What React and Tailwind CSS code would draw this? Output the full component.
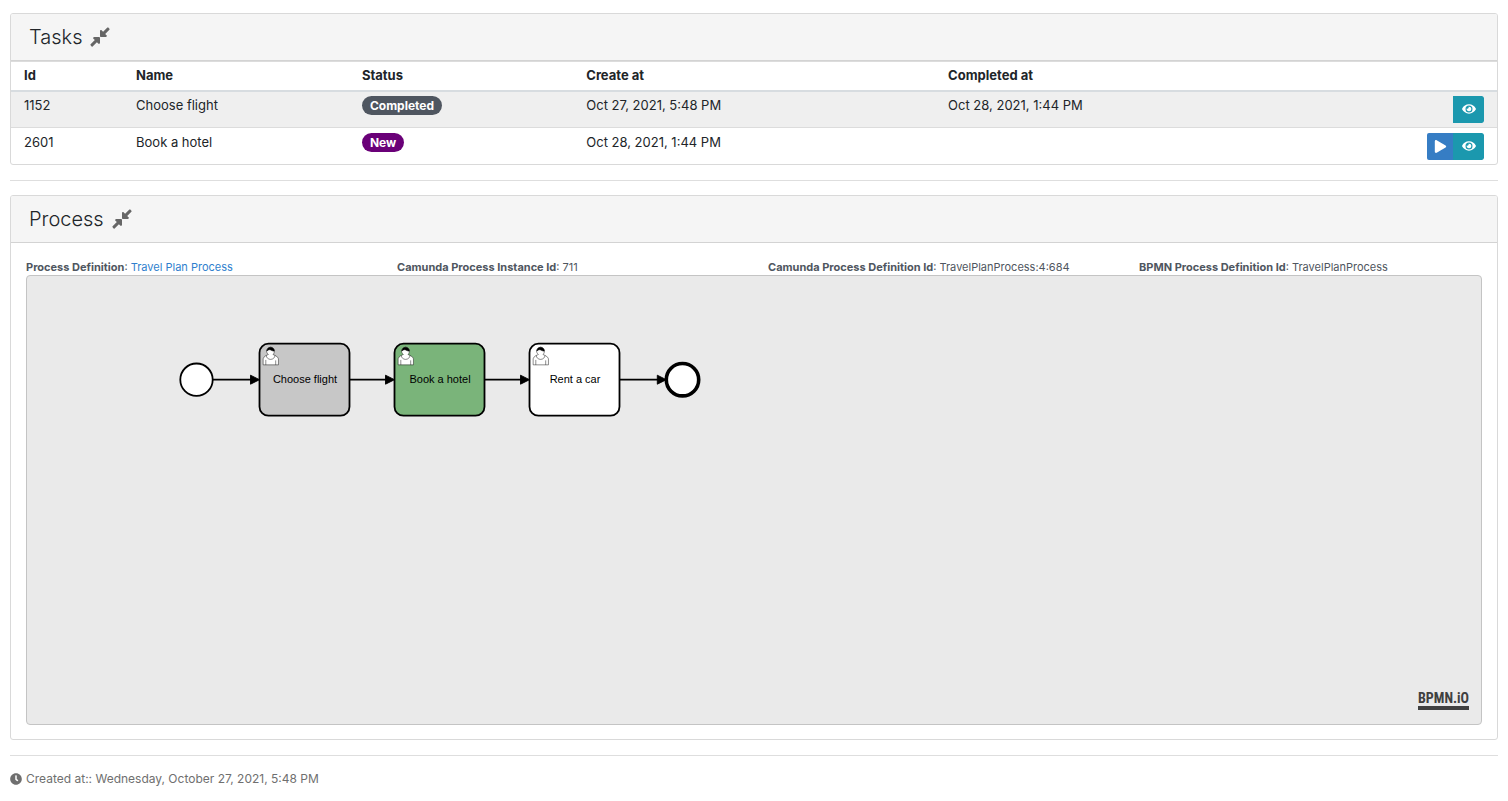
import React from "react";
import { FaClock, FaCompressAlt, FaEye, FaPlay } from "react-icons/fa";

const tasks = [
  {
    id: "1152",
    name: "Choose flight",
    status: "Completed",
    created: "Oct 27, 2021, 5:48 PM",
    completed: "Oct 28, 2021, 1:44 PM",
    badge: "bg-[#4f5660]",
    row: "bg-[#efefef] border-t-2 border-[#d7dce0]",
    pad: "pt-1 pb-1",
    open: false,
  },
  {
    id: "2601",
    name: "Book a hotel",
    status: "New",
    created: "Oct 28, 2021, 1:44 PM",
    completed: "",
    badge: "bg-[#6a0078]",
    row: "border-t border-[#dcdcdc]",
    pad: "pt-[5px] pb-1",
    open: true,
  },
];

function Card({ title, children }) {
  return (
    <section className="overflow-hidden rounded-[3px] border border-[#d9d9d9] bg-white">
      <header className="flex h-[47px] items-center gap-[7px] border-b border-[#d3d3d3] bg-[#f5f5f5] px-[18px]">
        <h2 className="text-[20px] leading-6 font-light text-[#212529]">{title}</h2>
        <button type="button" aria-label={`Collapse ${title}`} className="text-[#666666]">
          <FaCompressAlt className="size-[22px]" />
        </button>
      </header>
      {children}
    </section>
  );
}

function TaskTable() {
  return (
    <table className="w-full table-fixed border-collapse text-left text-[13px] leading-[18px] text-[#212529]">
      <thead>
        <tr className="h-[29px] border-t border-[#dcdcdc] align-top">
          <th className="w-[7.54%] px-[13px] pt-1 font-bold">Id</th>
          <th className="w-[15.2%] px-[13px] pt-1 font-bold">Name</th>
          <th className="w-[15.1%] px-[13px] pt-1 font-bold">Status</th>
          <th className="w-[24.35%] px-[13px] pt-1 font-bold">Create at</th>
          <th className="px-[13px] pt-1 font-bold">Completed at</th>
          <th className="w-[8%] px-[13px] pt-1" aria-label="Actions"></th>
        </tr>
      </thead>
      <tbody>
        {tasks.map((t) => (
          <tr key={t.id} className={`align-top ${t.row}`}>
            <td className={`px-[13px] ${t.pad}`}>{t.id}</td>
            <td className={`px-[13px] ${t.pad}`}>{t.name}</td>
            <td className={`px-[13px] ${t.pad}`}>
              <span className={`inline-block rounded-full px-2 text-[12px] leading-[19px] font-bold text-white ${t.badge}`}>
                {t.status}
              </span>
            </td>
            <td className={`px-[13px] ${t.pad}`}>{t.created}</td>
            <td className={`px-[13px] ${t.pad}`}>{t.completed}</td>
            <td className={`px-[13px] ${t.pad}`}>
              <div className="flex justify-end overflow-hidden rounded-[2px] text-white">
                {t.open && (
                  <button type="button" aria-label="Open task" className="flex h-[27px] w-[26px] items-center justify-center rounded-l-[2px] bg-[#367dc4]">
                    <FaPlay className="size-[13px]" />
                  </button>
                )}
                <button type="button" aria-label="View task" className="flex h-[27px] w-[31px] items-center justify-center rounded-r-[2px] bg-[#1b98ae]">
                  <FaEye className="size-[14px]" />
                </button>
              </div>
            </td>
          </tr>
        ))}
      </tbody>
    </table>
  );
}

function Flow({ from, to }) {
  return (
    <g>
      <path d={`M${from} 0H${to - 8}`} stroke="#000" strokeWidth="2" />
      <path d={`M${to - 10} -5L${to} 0L${to - 10} 5Z`} fill="#000" stroke="#000" />
    </g>
  );
}

function UserTask({ x, fill }) {
  return (
    <g transform={`translate(${x} -40)`}>
      <rect width="100" height="80" rx="10" fill={fill} stroke="#000" strokeWidth="2" />
      <g transform="translate(15 12)" stroke="#000" strokeWidth="0.5">
        <path
          fill="#fff"
          d="m0,0c0.909,-0.845 1.594,-2.049 1.594,-3.385 0,-2.554 -1.805,-4.622 -4.357,-4.622 -2.552,0 -4.288,2.068 -4.288,4.622 0,1.348 0.974,2.562 1.896,3.405 -0.529,0.187 -5.669,2.097 -5.794,4.756v6.718h17v-6.718c0,-2.298 -5.528,-4.595 -6.051,-4.776zm-8,6l0,5.5m11,0l0,-5"
        />
        <path fill="none" d="m2.162,1.009c0,2.447 -2.158,4.431 -4.821,4.431 -2.665,0 -4.822,-1.981 -4.822,-4.431" />
        <path
          fill="#000"
          d="m-6.9,-3.8c0,0 2.251,-2.358 4.274,-1.177 2.024,1.181 4.221,1.537 4.124,0.965 -0.098,-0.57 -0.117,-3.791 -4.191,-4.136 -3.572,0.001 -4.208,3.673 -4.207,4.348z"
        />
      </g>
    </g>
  );
}

function Diagram() {
  return (
    <svg
      width="720"
      height="200"
      role="img"
      aria-label="Travel Plan Process"
      className="max-w-full"
      fontFamily="Liberation Sans, sans-serif"
      fontSize="11"
      textAnchor="middle"
    >
      <g transform="translate(169.5 103.7) scale(0.9)">
        <circle r="18" fill="#fff" stroke="#000" strokeWidth="2" />
        <UserTask x={70} fill="#c7c7c7" />
        <UserTask x={220} fill="#7ab47a" />
        <UserTask x={370} fill="#fff" />
        <circle cx="540" r="18" fill="#fff" stroke="#000" strokeWidth="4" />
        <Flow from={18} to={70} />
        <Flow from={170} to={220} />
        <Flow from={320} to={370} />
        <Flow from={470} to={522} />
      </g>
      <text x="278" y="107">Choose flight</text>
      <text x="413" y="107">Book a hotel</text>
      <text x="548" y="107">Rent a car</text>
    </svg>
  );
}

export default function App() {
  return (
    <main className="px-[10px] pt-[13px] pb-3 font-[Inter,sans-serif]">
      <Card title="Tasks">
        <TaskTable />
      </Card>
      <hr className="mt-[15px] mb-[14px] border-[#dedede]" />
      <Card title="Process">
        <div className="px-[15px] pt-4 pb-[14px]">
          <div className="grid grid-cols-4 gap-x-7 text-[11px] leading-4 text-[#4f5660]">
            <p>
              <strong>Process Definition</strong>:{" "}
              <a href="#definition" className="text-[#2f7fce]">Travel Plan Process</a>
            </p>
            <p><strong>Camunda Process Instance Id</strong>: 711</p>
            <p><strong>Camunda Process Definition Id</strong>: TravelPlanProcess:4:684</p>
            <p><strong>BPMN Process Definition Id</strong>: TravelPlanProcess</p>
          </div>
          <div className="flex min-h-[450px] flex-col justify-between rounded-[4px] border border-[#c4c4c4] bg-[#eaeaea]">
            <Diagram />
            <a
              href="#bpmn"
              className="mr-3 mb-[14px] self-end border-b-4 border-[#404040] font-['Roboto_Condensed','Liberation_Sans',sans-serif] text-[14px] leading-4 font-bold text-[#404040]"
            >
              BPMN.iO
            </a>
          </div>
        </div>
      </Card>
      <hr className="mt-[15px] mb-[14px] border-[#dedede]" />
      <footer className="flex items-center gap-1 text-[12px] leading-[18px] text-[#6f6f6f]">
        <FaClock className="size-3" />
        <span>Created at:: Wednesday, October 27, 2021, 5:48 PM</span>
      </footer>
    </main>
  );
}
